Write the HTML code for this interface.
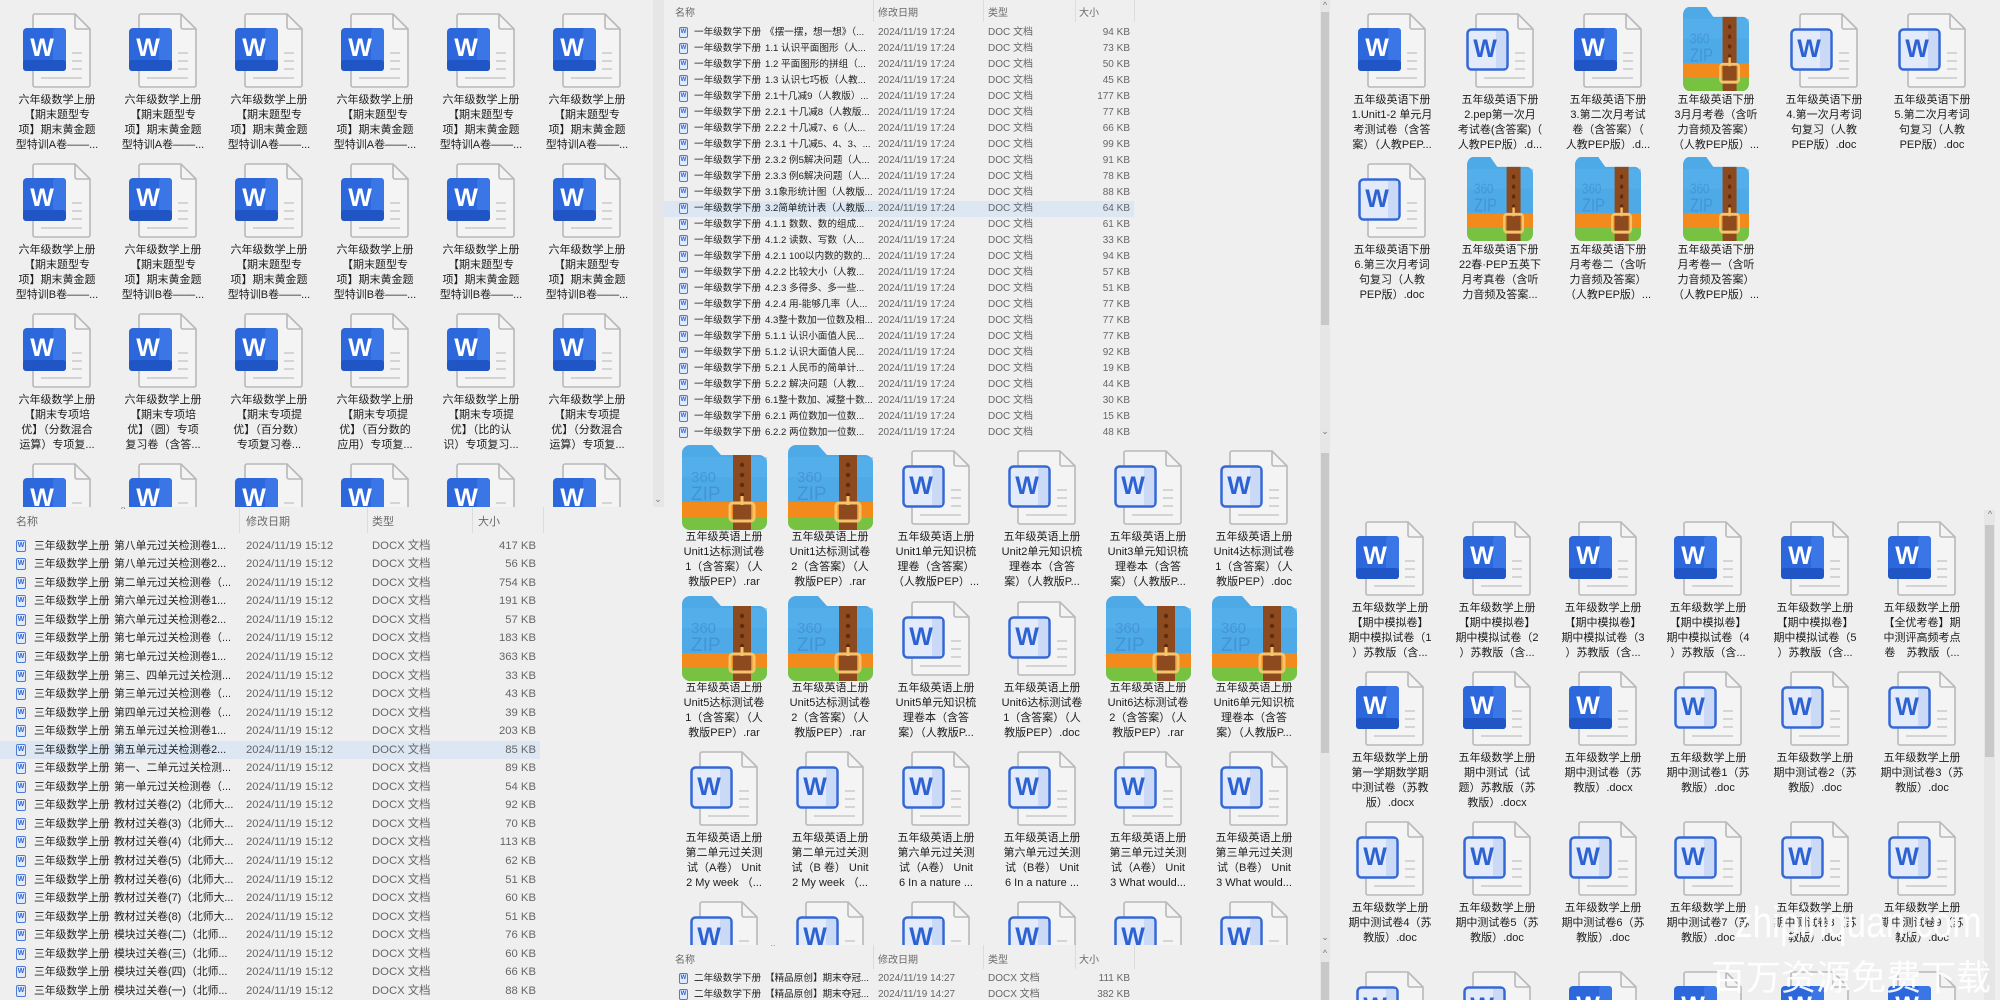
<!DOCTYPE html>
<html><head><meta charset="utf-8">
<style>
*{box-sizing:border-box}
html{overflow:hidden;height:1000px}
body{margin:0;width:2000px;height:1000px;overflow:hidden;background:#efefef;font-family:"Liberation Sans","Noto Sans CJK SC",sans-serif;position:relative}
.p{position:absolute;overflow:hidden;background:#efefef}
.it{position:absolute;width:100px;height:1px}
.it svg{position:absolute}
.it svg.ds{left:16px;top:0}
.it svg.zp{left:8px;top:-5px}
.it svg.zn{left:17px;top:-6px}
.it p{position:absolute;top:80px;left:-10px;width:120px;margin:0;text-align:center;font-size:11px;line-height:15px;color:#1c1c1c;white-space:nowrap}
.hd{position:absolute;font-size:11px;color:#6a6a6a;white-space:nowrap}
.sep{position:absolute;width:1px;background:#dcdcdc}
.L{position:absolute;left:0}
.r{position:relative;white-space:nowrap;color:#222}
.r span,.r i{position:absolute;top:0}
.r .c,.r .d,.r .e{color:#666}
.r .e{text-align:right;width:80px}
.r i{width:10px;height:12px;border:1px solid #4a7bd8;border-radius:2px;background:#e2ebfb;font-style:normal;font-size:7px;line-height:10px;text-align:center;color:#2d62d0;font-weight:bold;font-family:"Liberation Sans",sans-serif}
.hl{background:#dce7f3}
.L2 .r{height:18.55px;line-height:18.55px;font-size:11.3px;width:540px}
.L2 i{left:16px;top:3px}
.L2 .a{left:34px;font-size:10.8px}.L2 .b{left:114px;font-size:10.8px}.L2 .c{left:246px}.L2 .d{left:372px}.L2 .e{left:456px}
.L3 .r{height:16px;line-height:16px;font-size:10px;width:474px}
.L3 i{left:19px;top:2px;width:9px;height:11px;font-size:6px;line-height:9px}
.L3 .a{left:34px;font-size:9.6px}.L3 .b{left:105px;font-size:9.6px}.L3 .c{left:218px}.L3 .d{left:328px}.L3 .e{left:390px}
.sb{position:absolute;background:#e6e6e6}
.th{position:absolute;background:#c8c8c8}
.ar{position:absolute;font-size:9px;color:#777;width:10px;text-align:center}
.wm{position:absolute;color:rgba(255,255,255,.92);white-space:nowrap;font-family:"Liberation Sans","Noto Sans CJK SC",sans-serif}
</style></head><body>

<!-- P1 top-left grid -->
<div class="p" style="left:0;top:0;width:652px;height:507px">
<div class="it s" style="left:7px;top:13px"><p>六年级数学上册<br>【期末题型专<br>项】期末黄金题<br>型特训A卷——...</p></div>
<div class="it s" style="left:113px;top:13px"><p>六年级数学上册<br>【期末题型专<br>项】期末黄金题<br>型特训A卷——...</p></div>
<div class="it s" style="left:219px;top:13px"><p>六年级数学上册<br>【期末题型专<br>项】期末黄金题<br>型特训A卷——...</p></div>
<div class="it s" style="left:325px;top:13px"><p>六年级数学上册<br>【期末题型专<br>项】期末黄金题<br>型特训A卷——...</p></div>
<div class="it s" style="left:431px;top:13px"><p>六年级数学上册<br>【期末题型专<br>项】期末黄金题<br>型特训A卷——...</p></div>
<div class="it s" style="left:537px;top:13px"><p>六年级数学上册<br>【期末题型专<br>项】期末黄金题<br>型特训A卷——...</p></div>
<div class="it s" style="left:7px;top:163px"><p>六年级数学上册<br>【期末题型专<br>项】期末黄金题<br>型特训B卷——...</p></div>
<div class="it s" style="left:113px;top:163px"><p>六年级数学上册<br>【期末题型专<br>项】期末黄金题<br>型特训B卷——...</p></div>
<div class="it s" style="left:219px;top:163px"><p>六年级数学上册<br>【期末题型专<br>项】期末黄金题<br>型特训B卷——...</p></div>
<div class="it s" style="left:325px;top:163px"><p>六年级数学上册<br>【期末题型专<br>项】期末黄金题<br>型特训B卷——...</p></div>
<div class="it s" style="left:431px;top:163px"><p>六年级数学上册<br>【期末题型专<br>项】期末黄金题<br>型特训B卷——...</p></div>
<div class="it s" style="left:537px;top:163px"><p>六年级数学上册<br>【期末题型专<br>项】期末黄金题<br>型特训B卷——...</p></div>
<div class="it s" style="left:7px;top:313px"><p>六年级数学上册<br>【期末专项培<br>优】（分数混合<br>运算）专项复...</p></div>
<div class="it s" style="left:113px;top:313px"><p>六年级数学上册<br>【期末专项培<br>优】（圆）专项<br>复习卷（含答...</p></div>
<div class="it s" style="left:219px;top:313px"><p>六年级数学上册<br>【期末专项提<br>优】（百分数）<br>专项复习卷...</p></div>
<div class="it s" style="left:325px;top:313px"><p>六年级数学上册<br>【期末专项提<br>优】（百分数的<br>应用）专项复...</p></div>
<div class="it s" style="left:431px;top:313px"><p>六年级数学上册<br>【期末专项提<br>优】（比的认<br>识）专项复习...</p></div>
<div class="it s" style="left:537px;top:313px"><p>六年级数学上册<br>【期末专项提<br>优】（分数混合<br>运算）专项复...</p></div>
<div class="it s" style="left:7px;top:463px"></div>
<div class="it s" style="left:113px;top:463px"></div>
<div class="it s" style="left:219px;top:463px"></div>
<div class="it s" style="left:325px;top:463px"></div>
<div class="it s" style="left:431px;top:463px"></div>
<div class="it s" style="left:537px;top:463px"></div>
</div>
<div class="sb" style="left:653px;top:0;width:11px;height:507px"></div>
<div class="ar" style="left:653px;top:494px">&#8964;</div>

<!-- P2 bottom-left list -->
<div class="p" style="left:0;top:507px;width:660px;height:493px">
<div class="hd" style="left:16px;top:6px">名称</div>
<div class="hd" style="left:121px;top:-3px;font-size:9px">^</div>
<div class="hd" style="left:246px;top:6px">修改日期</div>
<div class="hd" style="left:372px;top:6px">类型</div>
<div class="hd" style="left:478px;top:6px">大小</div>
<div class="sep" style="left:239px;top:0;height:26px"></div><div class="sep" style="left:367px;top:0;height:26px"></div><div class="sep" style="left:472px;top:0;height:26px"></div><div class="sep" style="left:543px;top:0;height:26px"></div>
<div class="L L2" style="top:29.7px">
<div class="r"><i>W</i><span class="a">三年级数学上册</span><span class="b">第八单元过关检测卷1...</span><span class="c">2024/11/19 15:12</span><span class="d">DOCX 文档</span><span class="e">417 KB</span></div>
<div class="r"><i>W</i><span class="a">三年级数学上册</span><span class="b">第八单元过关检测卷2...</span><span class="c">2024/11/19 15:12</span><span class="d">DOCX 文档</span><span class="e">56 KB</span></div>
<div class="r"><i>W</i><span class="a">三年级数学上册</span><span class="b">第二单元过关检测卷（...</span><span class="c">2024/11/19 15:12</span><span class="d">DOCX 文档</span><span class="e">754 KB</span></div>
<div class="r"><i>W</i><span class="a">三年级数学上册</span><span class="b">第六单元过关检测卷1...</span><span class="c">2024/11/19 15:12</span><span class="d">DOCX 文档</span><span class="e">191 KB</span></div>
<div class="r"><i>W</i><span class="a">三年级数学上册</span><span class="b">第六单元过关检测卷2...</span><span class="c">2024/11/19 15:12</span><span class="d">DOCX 文档</span><span class="e">57 KB</span></div>
<div class="r"><i>W</i><span class="a">三年级数学上册</span><span class="b">第七单元过关检测卷（...</span><span class="c">2024/11/19 15:12</span><span class="d">DOCX 文档</span><span class="e">183 KB</span></div>
<div class="r"><i>W</i><span class="a">三年级数学上册</span><span class="b">第七单元过关检测卷1...</span><span class="c">2024/11/19 15:12</span><span class="d">DOCX 文档</span><span class="e">363 KB</span></div>
<div class="r"><i>W</i><span class="a">三年级数学上册</span><span class="b">第三、四单元过关检测...</span><span class="c">2024/11/19 15:12</span><span class="d">DOCX 文档</span><span class="e">33 KB</span></div>
<div class="r"><i>W</i><span class="a">三年级数学上册</span><span class="b">第三单元过关检测卷（...</span><span class="c">2024/11/19 15:12</span><span class="d">DOCX 文档</span><span class="e">43 KB</span></div>
<div class="r"><i>W</i><span class="a">三年级数学上册</span><span class="b">第四单元过关检测卷（...</span><span class="c">2024/11/19 15:12</span><span class="d">DOCX 文档</span><span class="e">39 KB</span></div>
<div class="r"><i>W</i><span class="a">三年级数学上册</span><span class="b">第五单元过关检测卷1...</span><span class="c">2024/11/19 15:12</span><span class="d">DOCX 文档</span><span class="e">203 KB</span></div>
<div class="r hl"><i>W</i><span class="a">三年级数学上册</span><span class="b">第五单元过关检测卷2...</span><span class="c">2024/11/19 15:12</span><span class="d">DOCX 文档</span><span class="e">85 KB</span></div>
<div class="r"><i>W</i><span class="a">三年级数学上册</span><span class="b">第一、二单元过关检测...</span><span class="c">2024/11/19 15:12</span><span class="d">DOCX 文档</span><span class="e">89 KB</span></div>
<div class="r"><i>W</i><span class="a">三年级数学上册</span><span class="b">第一单元过关检测卷（...</span><span class="c">2024/11/19 15:12</span><span class="d">DOCX 文档</span><span class="e">54 KB</span></div>
<div class="r"><i>W</i><span class="a">三年级数学上册</span><span class="b">教材过关卷(2)（北师大...</span><span class="c">2024/11/19 15:12</span><span class="d">DOCX 文档</span><span class="e">92 KB</span></div>
<div class="r"><i>W</i><span class="a">三年级数学上册</span><span class="b">教材过关卷(3)（北师大...</span><span class="c">2024/11/19 15:12</span><span class="d">DOCX 文档</span><span class="e">70 KB</span></div>
<div class="r"><i>W</i><span class="a">三年级数学上册</span><span class="b">教材过关卷(4)（北师大...</span><span class="c">2024/11/19 15:12</span><span class="d">DOCX 文档</span><span class="e">113 KB</span></div>
<div class="r"><i>W</i><span class="a">三年级数学上册</span><span class="b">教材过关卷(5)（北师大...</span><span class="c">2024/11/19 15:12</span><span class="d">DOCX 文档</span><span class="e">62 KB</span></div>
<div class="r"><i>W</i><span class="a">三年级数学上册</span><span class="b">教材过关卷(6)（北师大...</span><span class="c">2024/11/19 15:12</span><span class="d">DOCX 文档</span><span class="e">51 KB</span></div>
<div class="r"><i>W</i><span class="a">三年级数学上册</span><span class="b">教材过关卷(7)（北师大...</span><span class="c">2024/11/19 15:12</span><span class="d">DOCX 文档</span><span class="e">60 KB</span></div>
<div class="r"><i>W</i><span class="a">三年级数学上册</span><span class="b">教材过关卷(8)（北师大...</span><span class="c">2024/11/19 15:12</span><span class="d">DOCX 文档</span><span class="e">51 KB</span></div>
<div class="r"><i>W</i><span class="a">三年级数学上册</span><span class="b">模块过关卷(二)（北师...</span><span class="c">2024/11/19 15:12</span><span class="d">DOCX 文档</span><span class="e">76 KB</span></div>
<div class="r"><i>W</i><span class="a">三年级数学上册</span><span class="b">模块过关卷(三)（北师...</span><span class="c">2024/11/19 15:12</span><span class="d">DOCX 文档</span><span class="e">60 KB</span></div>
<div class="r"><i>W</i><span class="a">三年级数学上册</span><span class="b">模块过关卷(四)（北师...</span><span class="c">2024/11/19 15:12</span><span class="d">DOCX 文档</span><span class="e">66 KB</span></div>
<div class="r"><i>W</i><span class="a">三年级数学上册</span><span class="b">模块过关卷(一)（北师...</span><span class="c">2024/11/19 15:12</span><span class="d">DOCX 文档</span><span class="e">88 KB</span></div>
</div>
</div>

<!-- P3 top-middle list -->
<div class="p" style="left:664px;top:0;width:656px;height:440px">
<div style="position:absolute;left:-4px;top:0;width:670px;height:440px">
<div class="hd" style="left:15px;top:4px;font-size:10px">名称</div>
<div class="hd" style="left:111px;top:-5px;font-size:8px">^</div>
<div class="hd" style="left:218px;top:4px;font-size:10px">修改日期</div>
<div class="hd" style="left:328px;top:4px;font-size:10px">类型</div>
<div class="hd" style="left:419px;top:4px;font-size:10px">大小</div>
<div class="sep" style="left:213px;top:0;height:22px"></div><div class="sep" style="left:323px;top:0;height:22px"></div><div class="sep" style="left:415px;top:0;height:22px"></div><div class="sep" style="left:474px;top:0;height:22px"></div>
<div class="L L3" style="top:25px">
<div class="r"><i>W</i><span class="a">一年级数学下册</span><span class="b">《摆一摆，想一想》（...</span><span class="c">2024/11/19 17:24</span><span class="d">DOC 文档</span><span class="e">94 KB</span></div>
<div class="r"><i>W</i><span class="a">一年级数学下册</span><span class="b">1.1 认识平面图形（人...</span><span class="c">2024/11/19 17:24</span><span class="d">DOC 文档</span><span class="e">73 KB</span></div>
<div class="r"><i>W</i><span class="a">一年级数学下册</span><span class="b">1.2 平面图形的拼组（...</span><span class="c">2024/11/19 17:24</span><span class="d">DOC 文档</span><span class="e">50 KB</span></div>
<div class="r"><i>W</i><span class="a">一年级数学下册</span><span class="b">1.3 认识七巧板（人教...</span><span class="c">2024/11/19 17:24</span><span class="d">DOC 文档</span><span class="e">45 KB</span></div>
<div class="r"><i>W</i><span class="a">一年级数学下册</span><span class="b">2.1十几减9（人教版）...</span><span class="c">2024/11/19 17:24</span><span class="d">DOC 文档</span><span class="e">177 KB</span></div>
<div class="r"><i>W</i><span class="a">一年级数学下册</span><span class="b">2.2.1 十几减8（人教版...</span><span class="c">2024/11/19 17:24</span><span class="d">DOC 文档</span><span class="e">77 KB</span></div>
<div class="r"><i>W</i><span class="a">一年级数学下册</span><span class="b">2.2.2 十几减7、6（人...</span><span class="c">2024/11/19 17:24</span><span class="d">DOC 文档</span><span class="e">66 KB</span></div>
<div class="r"><i>W</i><span class="a">一年级数学下册</span><span class="b">2.3.1 十几减5、4、3、...</span><span class="c">2024/11/19 17:24</span><span class="d">DOC 文档</span><span class="e">99 KB</span></div>
<div class="r"><i>W</i><span class="a">一年级数学下册</span><span class="b">2.3.2 例5解决问题（人...</span><span class="c">2024/11/19 17:24</span><span class="d">DOC 文档</span><span class="e">91 KB</span></div>
<div class="r"><i>W</i><span class="a">一年级数学下册</span><span class="b">2.3.3 例6解决问题（人...</span><span class="c">2024/11/19 17:24</span><span class="d">DOC 文档</span><span class="e">78 KB</span></div>
<div class="r"><i>W</i><span class="a">一年级数学下册</span><span class="b">3.1象形统计图（人教版...</span><span class="c">2024/11/19 17:24</span><span class="d">DOC 文档</span><span class="e">88 KB</span></div>
<div class="r hl"><i>W</i><span class="a">一年级数学下册</span><span class="b">3.2简单统计表（人教版...</span><span class="c">2024/11/19 17:24</span><span class="d">DOC 文档</span><span class="e">64 KB</span></div>
<div class="r"><i>W</i><span class="a">一年级数学下册</span><span class="b">4.1.1 数数、数的组成...</span><span class="c">2024/11/19 17:24</span><span class="d">DOC 文档</span><span class="e">61 KB</span></div>
<div class="r"><i>W</i><span class="a">一年级数学下册</span><span class="b">4.1.2 读数、写数（人...</span><span class="c">2024/11/19 17:24</span><span class="d">DOC 文档</span><span class="e">33 KB</span></div>
<div class="r"><i>W</i><span class="a">一年级数学下册</span><span class="b">4.2.1 100以内数的数的...</span><span class="c">2024/11/19 17:24</span><span class="d">DOC 文档</span><span class="e">94 KB</span></div>
<div class="r"><i>W</i><span class="a">一年级数学下册</span><span class="b">4.2.2 比较大小（人教...</span><span class="c">2024/11/19 17:24</span><span class="d">DOC 文档</span><span class="e">57 KB</span></div>
<div class="r"><i>W</i><span class="a">一年级数学下册</span><span class="b">4.2.3 多得多、多一些...</span><span class="c">2024/11/19 17:24</span><span class="d">DOC 文档</span><span class="e">51 KB</span></div>
<div class="r"><i>W</i><span class="a">一年级数学下册</span><span class="b">4.2.4 用-能够几率（人...</span><span class="c">2024/11/19 17:24</span><span class="d">DOC 文档</span><span class="e">77 KB</span></div>
<div class="r"><i>W</i><span class="a">一年级数学下册</span><span class="b">4.3整十数加一位数及相...</span><span class="c">2024/11/19 17:24</span><span class="d">DOC 文档</span><span class="e">77 KB</span></div>
<div class="r"><i>W</i><span class="a">一年级数学下册</span><span class="b">5.1.1 认识小面值人民...</span><span class="c">2024/11/19 17:24</span><span class="d">DOC 文档</span><span class="e">77 KB</span></div>
<div class="r"><i>W</i><span class="a">一年级数学下册</span><span class="b">5.1.2 认识大面值人民...</span><span class="c">2024/11/19 17:24</span><span class="d">DOC 文档</span><span class="e">92 KB</span></div>
<div class="r"><i>W</i><span class="a">一年级数学下册</span><span class="b">5.2.1 人民币的简单计...</span><span class="c">2024/11/19 17:24</span><span class="d">DOC 文档</span><span class="e">19 KB</span></div>
<div class="r"><i>W</i><span class="a">一年级数学下册</span><span class="b">5.2.2 解决问题（人教...</span><span class="c">2024/11/19 17:24</span><span class="d">DOC 文档</span><span class="e">44 KB</span></div>
<div class="r"><i>W</i><span class="a">一年级数学下册</span><span class="b">6.1整十数加、减整十数...</span><span class="c">2024/11/19 17:24</span><span class="d">DOC 文档</span><span class="e">30 KB</span></div>
<div class="r"><i>W</i><span class="a">一年级数学下册</span><span class="b">6.2.1 两位数加一位数...</span><span class="c">2024/11/19 17:24</span><span class="d">DOC 文档</span><span class="e">15 KB</span></div>
<div class="r"><i>W</i><span class="a">一年级数学下册</span><span class="b">6.2.2 两位数加一位数...</span><span class="c">2024/11/19 17:24</span><span class="d">DOC 文档</span><span class="e">48 KB</span></div>
</div>
</div>
</div>
<div class="sb" style="left:1320px;top:0;width:10px;height:440px"></div>
<div class="th" style="left:1321px;top:12px;width:8px;height:313px"></div>
<div class="ar" style="left:1320px;top:0px">^</div>
<div class="ar" style="left:1320px;top:426px">&#8964;</div>

<!-- P4 middle grid -->
<div class="p" style="left:664px;top:440px;width:656px;height:505px">
<div style="position:absolute;left:-4px;top:0">
<div class="it z" style="left:14px;top:10px"><p>五年级英语上册<br>Unit1达标测试卷<br>1（含答案）（人<br>教版PEP）.rar</p></div>
<div class="it z" style="left:120px;top:10px"><p>五年级英语上册<br>Unit1达标测试卷<br>2（含答案）（人<br>教版PEP）.rar</p></div>
<div class="it o" style="left:226px;top:10px"><p>五年级英语上册<br>Unit1单元知识梳<br>理卷（含答案）<br>（人教版PEP）...</p></div>
<div class="it o" style="left:332px;top:10px"><p>五年级英语上册<br>Unit2单元知识梳<br>理卷本（含答<br>案）（人教版P...</p></div>
<div class="it o" style="left:438px;top:10px"><p>五年级英语上册<br>Unit3单元知识梳<br>理卷本（含答<br>案）（人教版P...</p></div>
<div class="it o" style="left:544px;top:10px"><p>五年级英语上册<br>Unit4达标测试卷<br>1（含答案）（人<br>教版PEP）.doc</p></div>
<div class="it z" style="left:14px;top:161px"><p>五年级英语上册<br>Unit5达标测试卷<br>1（含答案）（人<br>教版PEP）.rar</p></div>
<div class="it z" style="left:120px;top:161px"><p>五年级英语上册<br>Unit5达标测试卷<br>2（含答案）（人<br>教版PEP）.rar</p></div>
<div class="it o" style="left:226px;top:161px"><p>五年级英语上册<br>Unit5单元知识梳<br>理卷本（含答<br>案）（人教版P...</p></div>
<div class="it o" style="left:332px;top:161px"><p>五年级英语上册<br>Unit6达标测试卷<br>1（含答案）（人<br>教版PEP）.doc</p></div>
<div class="it z" style="left:438px;top:161px"><p>五年级英语上册<br>Unit6达标测试卷<br>2（含答案）（人<br>教版PEP）.rar</p></div>
<div class="it z" style="left:544px;top:161px"><p>五年级英语上册<br>Unit6单元知识梳<br>理卷本（含答<br>案）（人教版P...</p></div>
<div class="it o" style="left:14px;top:311px"><p>五年级英语上册<br>第二单元过关测<br>试（A卷） Unit<br>2 My week （...</p></div>
<div class="it o" style="left:120px;top:311px"><p>五年级英语上册<br>第二单元过关测<br>试（B 卷） Unit<br>2 My week （...</p></div>
<div class="it o" style="left:226px;top:311px"><p>五年级英语上册<br>第六单元过关测<br>试（A卷） Unit<br>6 In a nature ...</p></div>
<div class="it o" style="left:332px;top:311px"><p>五年级英语上册<br>第六单元过关测<br>试（B卷） Unit<br>6 In a nature ...</p></div>
<div class="it o" style="left:438px;top:311px"><p>五年级英语上册<br>第三单元过关测<br>试（A卷） Unit<br>3 What would...</p></div>
<div class="it o" style="left:544px;top:311px"><p>五年级英语上册<br>第三单元过关测<br>试（B卷） Unit<br>3 What would...</p></div>
<div class="it o" style="left:14px;top:461px"></div>
<div class="it o" style="left:120px;top:461px"></div>
<div class="it o" style="left:226px;top:461px"></div>
<div class="it o" style="left:332px;top:461px"></div>
<div class="it o" style="left:438px;top:461px"></div>
<div class="it o" style="left:544px;top:461px"></div>
</div>
</div>
<div class="sb" style="left:1320px;top:440px;width:10px;height:505px"></div>
<div class="th" style="left:1321px;top:453px;width:8px;height:300px"></div>
<div class="ar" style="left:1320px;top:932px">&#8964;</div>

<!-- P5 bottom-middle list -->
<div class="p" style="left:660px;top:945px;width:660px;height:55px">
<div class="hd" style="left:15px;top:6px;font-size:10px">名称</div>
<div class="hd" style="left:111px;top:-3px;font-size:8px">^</div>
<div class="hd" style="left:218px;top:6px;font-size:10px">修改日期</div>
<div class="hd" style="left:328px;top:6px;font-size:10px">类型</div>
<div class="hd" style="left:419px;top:6px;font-size:10px">大小</div>
<div class="sep" style="left:213px;top:0;height:24px"></div><div class="sep" style="left:323px;top:0;height:24px"></div><div class="sep" style="left:415px;top:0;height:24px"></div><div class="sep" style="left:474px;top:0;height:24px"></div>
<div class="L L3" style="top:26px">
<div class="r"><i>W</i><span class="a">二年级数学下册</span><span class="b">【精品原创】期末夺冠...</span><span class="c">2024/11/19 14:27</span><span class="d">DOCX 文档</span><span class="e">111 KB</span></div>
<div class="r"><i>W</i><span class="a">二年级数学下册</span><span class="b">【精品原创】期末夺冠...</span><span class="c">2024/11/19 14:27</span><span class="d">DOCX 文档</span><span class="e">382 KB</span></div>
</div>
</div>
<div class="sb" style="left:1320px;top:945px;width:10px;height:55px"></div>
<div class="th" style="left:1321px;top:962px;width:8px;height:38px"></div>
<div class="ar" style="left:1320px;top:948px">^</div>

<!-- P6 right-top grid -->
<div class="p" style="left:1330px;top:0;width:670px;height:505px">
<div class="it s" style="left:12px;top:13px"><p>五年级英语下册<br>1.Unit1-2 单元月<br>考测试卷（含答<br>案）（人教PEP...</p></div>
<div class="it o" style="left:120px;top:13px"><p>五年级英语下册<br>2.pep第一次月<br>考试卷(含答案)（<br>人教PEP版）.d...</p></div>
<div class="it s" style="left:228px;top:13px"><p>五年级英语下册<br>3.第二次月考试<br>卷（含答案）（<br>人教PEP版）.d...</p></div>
<div class="it zn" style="left:336px;top:13px"><p>五年级英语下册<br>3月月考卷（含听<br>力音频及答案）<br>（人教PEP版）...</p></div>
<div class="it o" style="left:444px;top:13px"><p>五年级英语下册<br>4.第一次月考词<br>句复习（人教<br>PEP版）.doc</p></div>
<div class="it o" style="left:552px;top:13px"><p>五年级英语下册<br>5.第二次月考词<br>句复习（人教<br>PEP版）.doc</p></div>
<div class="it o" style="left:12px;top:163px"><p>五年级英语下册<br>6.第三次月考词<br>句复习（人教<br>PEP版）.doc</p></div>
<div class="it zn" style="left:120px;top:163px"><p>五年级英语下册<br>22春·PEP五英下<br>月考真卷（含听<br>力音频及答案...</p></div>
<div class="it zn" style="left:228px;top:163px"><p>五年级英语下册<br>月考卷二（含听<br>力音频及答案）<br>（人教PEP版）...</p></div>
<div class="it zn" style="left:336px;top:163px"><p>五年级英语下册<br>月考卷一（含听<br>力音频及答案）<br>（人教PEP版）...</p></div>
</div>

<!-- P7 right-bottom grid -->
<div class="p" style="left:1330px;top:505px;width:670px;height:495px">
<div class="it s" style="left:10px;top:16px"><p>五年级数学上册<br>【期中模拟卷】<br>期中模拟试卷（1<br>）苏教版（含...</p></div>
<div class="it s" style="left:117px;top:16px"><p>五年级数学上册<br>【期中模拟卷】<br>期中模拟试卷（2<br>）苏教版（含...</p></div>
<div class="it s" style="left:223px;top:16px"><p>五年级数学上册<br>【期中模拟卷】<br>期中模拟试卷（3<br>）苏教版（含...</p></div>
<div class="it s" style="left:328px;top:16px"><p>五年级数学上册<br>【期中模拟卷】<br>期中模拟试卷（4<br>）苏教版（含...</p></div>
<div class="it s" style="left:435px;top:16px"><p>五年级数学上册<br>【期中模拟卷】<br>期中模拟试卷（5<br>）苏教版（含...</p></div>
<div class="it s" style="left:542px;top:16px"><p>五年级数学上册<br>【全优考卷】期<br>中测评高频考点<br>卷　苏教版（...</p></div>
<div class="it s" style="left:10px;top:166px"><p>五年级数学上册<br>第一学期数学期<br>中测试卷（苏教<br>版）.docx</p></div>
<div class="it s" style="left:117px;top:166px"><p>五年级数学上册<br>期中测试（试<br>题）苏教版（苏<br>教版）.docx</p></div>
<div class="it s" style="left:223px;top:166px"><p>五年级数学上册<br>期中测试卷（苏<br>教版）.docx</p></div>
<div class="it o" style="left:328px;top:166px"><p>五年级数学上册<br>期中测试卷1（苏<br>教版）.doc</p></div>
<div class="it o" style="left:435px;top:166px"><p>五年级数学上册<br>期中测试卷2（苏<br>教版）.doc</p></div>
<div class="it o" style="left:542px;top:166px"><p>五年级数学上册<br>期中测试卷3（苏<br>教版）.doc</p></div>
<div class="it o" style="left:10px;top:316px"><p>五年级数学上册<br>期中测试卷4（苏<br>教版）.doc</p></div>
<div class="it o" style="left:117px;top:316px"><p>五年级数学上册<br>期中测试卷5（苏<br>教版）.doc</p></div>
<div class="it o" style="left:223px;top:316px"><p>五年级数学上册<br>期中测试卷6（苏<br>教版）.doc</p></div>
<div class="it o" style="left:328px;top:316px"><p>五年级数学上册<br>期中测试卷7（苏<br>教版）.doc</p></div>
<div class="it o" style="left:435px;top:316px"><p>五年级数学上册<br>期中测试卷8（苏<br>教版）.doc</p></div>
<div class="it o" style="left:542px;top:316px"><p>五年级数学上册<br>期中测试卷9（苏<br>教版）.doc</p></div>
<div class="it o" style="left:10px;top:466px"></div>
<div class="it o" style="left:117px;top:466px"></div>
<div class="it s" style="left:223px;top:466px"></div>
<div class="it s" style="left:328px;top:466px"></div>
<div class="it s" style="left:435px;top:466px"></div>
<div class="it s" style="left:542px;top:466px"></div>
<div class="sb" style="left:654px;top:5px;width:11px;height:490px"></div>
<div class="th" style="left:655px;top:20px;width:9px;height:232px"></div>
<div class="ar" style="left:655px;top:4px">^</div>
</div>

<div class="wm" style="left:1735px;top:898px;font-size:44px;transform:scaleX(.8);transform-origin:left top">zhipinquan.com</div>
<div class="wm" style="left:1711px;top:950px;font-size:35px">百万资源免费下载</div>

<script>
(function(){
var docS='<rect x="0" y="15" width="43" height="43" rx="4" fill="#2c67dc"/><rect x="30" y="15" width="13" height="43" rx="3" fill="#3b76e6"/><rect x="0" y="47" width="43" height="11" rx="3" fill="#1f55c4"/><text x="19" y="43" font-size="25" font-weight="bold" fill="#fff" text-anchor="middle" font-family="Liberation Sans,sans-serif">W</text>';
var docO='<rect x="1.5" y="16.5" width="40" height="40" rx="4" fill="#e3ebfb" stroke="#3468d6" stroke-width="2.5"/><rect x="30" y="18" width="10" height="37" fill="#c9d9f6"/><text x="19" y="44" font-size="25" font-weight="bold" fill="#2c62d2" text-anchor="middle" font-family="Liberation Sans,sans-serif">W</text>';
function doc(s){return '<svg class="ds" width="68" height="75" viewBox="0 0 68 75"><path d="M12 1H52L67 16V72a2 2 0 0 1-2 2H12a2 2 0 0 1-2-2V3a2 2 0 0 1 2-2Z" fill="#f4f4f4" stroke="#b8b8b8" stroke-width="1.6"/><path d="M52 1V14a2 2 0 0 0 2 2H67" fill="none" stroke="#b8b8b8" stroke-width="1.6"/><path d="M49 40H59M49 48H59M49 56H59M18 65H59" stroke="#d4d4d4" stroke-width="2"/>'+(s?docS:docO)+'</svg>';}
function zip(c,w){return '<svg class="'+c+'" width="'+w+'" height="'+(c=='zp'?85:84)+'" viewBox="0 0 85 85" preserveAspectRatio="none"><path d="M8 0H30L39 10H77a8 8 0 0 1 8 8V77a8 8 0 0 1-8 8H8a8 8 0 0 1-8-8V8a8 8 0 0 1 8-8Z" fill="#4ea9e7"/><path d="M0 12H85V32H0Z" fill="#5ab4ec" opacity=".5"/><rect x="0" y="57" width="85" height="15" fill="#f28b1b"/><path d="M0 72H85V77a8 8 0 0 1-8 8H8a8 8 0 0 1-8-8Z" fill="#78c241"/><rect x="51" y="10" width="18" height="75" fill="#8e4a1f"/><circle cx="60" cy="20" r="2.2" fill="#5e2d10"/><circle cx="60" cy="30" r="2.2" fill="#5e2d10"/><circle cx="60" cy="40" r="2.2" fill="#5e2d10"/><circle cx="60" cy="50" r="2.2" fill="#5e2d10"/><rect x="48" y="58" width="24" height="18" rx="3" fill="none" stroke="#f6c46a" stroke-width="3"/><path d="M60 51V60" stroke="#f6c46a" stroke-width="3"/><text x="9" y="37" font-size="15" fill="#3a86c8" opacity=".55" font-family="Liberation Sans,sans-serif">360</text><text x="9" y="55" font-size="19" fill="#3a86c8" opacity=".55" font-family="Liberation Sans,sans-serif">ZIP</text></svg>';}
document.querySelectorAll('.it').forEach(function(e){
 var h='';
 if(e.classList.contains('s'))h=doc(1);
 else if(e.classList.contains('o'))h=doc(0);
 else if(e.classList.contains('zn'))h=zip('zn',66);
 else if(e.classList.contains('z'))h=zip('zp',85);
 e.insertAdjacentHTML('afterbegin',h);
});
})();
</script>
</body></html>
